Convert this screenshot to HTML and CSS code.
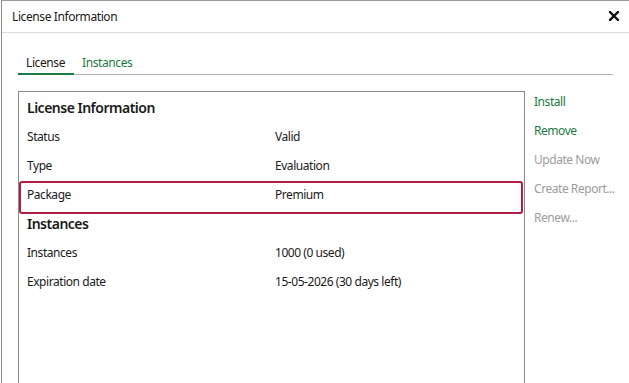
FILE: index.html
```html
<!DOCTYPE html>
<html lang="en">
<head>
  <meta charset="UTF-8" />
  <title>License Information</title>
  <link rel="stylesheet" href="styles.css">
</head>
<body>

  <div class="window">
    <div class="titlebar">
      <span class="title">License Information</span>
      <button class="close" title="Close">
        <svg width="10" height="10" viewBox="0 0 10 10">
          <path d="M1 1 L9 9 M9 1 L1 9" stroke="#111" stroke-width="2.4" stroke-linecap="square"/>
        </svg>
      </button>
    </div>

    <div class="content">
      <div class="tabs">
        <div class="tab active">License</div>
        <div class="tab">Instances</div>
      </div>

      <div class="main">
        <div class="panel">
          <div class="section-title">License Information</div>
          <div class="row"><span class="label">Status</span><span>Valid</span></div>
          <div class="row"><span class="label">Type</span><span>Evaluation</span></div>
          <div class="row selected"><span class="label">Package</span><span>Premium</span></div>

          <div class="section-title">Instances</div>
          <div class="row"><span class="label">Instances</span><span>1000 (0 used)</span></div>
          <div class="row"><span class="label">Expiration date</span><span>15-05-2026 (30 days left)</span></div>
        </div>

        <div class="actions">
          <a href="#">Install</a>
          <a href="#">Remove</a>
          <a class="disabled">Update Now</a>
          <a class="disabled">Create Report...</a>
          <a class="disabled">Renew...</a>
        </div>
      </div>
    </div>
  </div>

</body>
</html>
```

FILE: styles.css
```css
* {
  box-sizing: border-box;
  margin: 0;
  padding: 0;
}

body {
  font-family: "Noto Sans", "Open Sans", sans-serif;
  font-size: 12px;
  color: #1a1a1a;
  background: #fff;
  height: 100vh;
  overflow: hidden;
}

.window {
  margin-left: 1px;
  height: 100%;
  overflow: hidden;
  border-top: 1px solid #9a9a9a;
  border-left: 1px solid #8a8a8a;
  background: #fff;
}

.titlebar {
  height: 32px;
  display: flex;
  align-items: center;
  justify-content: space-between;
  padding: 0 10px 0 10px;
  border-bottom: 1px solid #dcdcdc;
}

.title {
  font-size: 12px;
  letter-spacing: -0.4px;
  margin-top: -1px;
}

.close {
  border: none;
  background: none;
  width: 10px;
  height: 10px;
  display: flex;
  margin-top: -1px;
}

.content {
  padding: 18px 16px 0 16px;
}

.tabs {
  display: flex;
  border-bottom: 1px solid #b4b4b4;
  height: 24px;
}

.tab {
  padding: 3px 9px 0 8px;
  color: #1a7a3f;
  letter-spacing: -0.4px;
}

.tab.active {
  color: #1a1a1a;
  border-bottom: 2px solid #1e7d44;
  margin-bottom: -1px;
}

.main {
  display: flex;
  margin-top: 16px;
  height: 300px;
}

.panel {
  width: 507px;
  flex-shrink: 0;
  border: 1px solid #8c8c8c;
  padding: 2px 0 0 8px;
}

.section-title {
  height: 29px;
  line-height: 27px;
  font-size: 14px;
  font-weight: 600;
  letter-spacing: -0.5px;
}

.row {
  display: flex;
  height: 29px;
  line-height: 28px;
  letter-spacing: -0.45px;
}

.row .label {
  width: 248px;
}

.row.selected {
  position: relative;
}

.row.selected::after {
  content: "";
  position: absolute;
  left: -8px;
  right: 1px;
  top: 0;
  bottom: -4px;
  border: 2px solid #b01f41;
  border-radius: 3px;
}

.actions {
  display: flex;
  flex-direction: column;
  margin-top: -3px;
  padding-left: 9px;
  white-space: nowrap;
}

.actions a {
  height: 29px;
  line-height: 28px;
  color: #1a7a3f;
  text-decoration: none;
  letter-spacing: -0.45px;
}

.actions a.disabled {
  color: #9c9c9c;
}
```
